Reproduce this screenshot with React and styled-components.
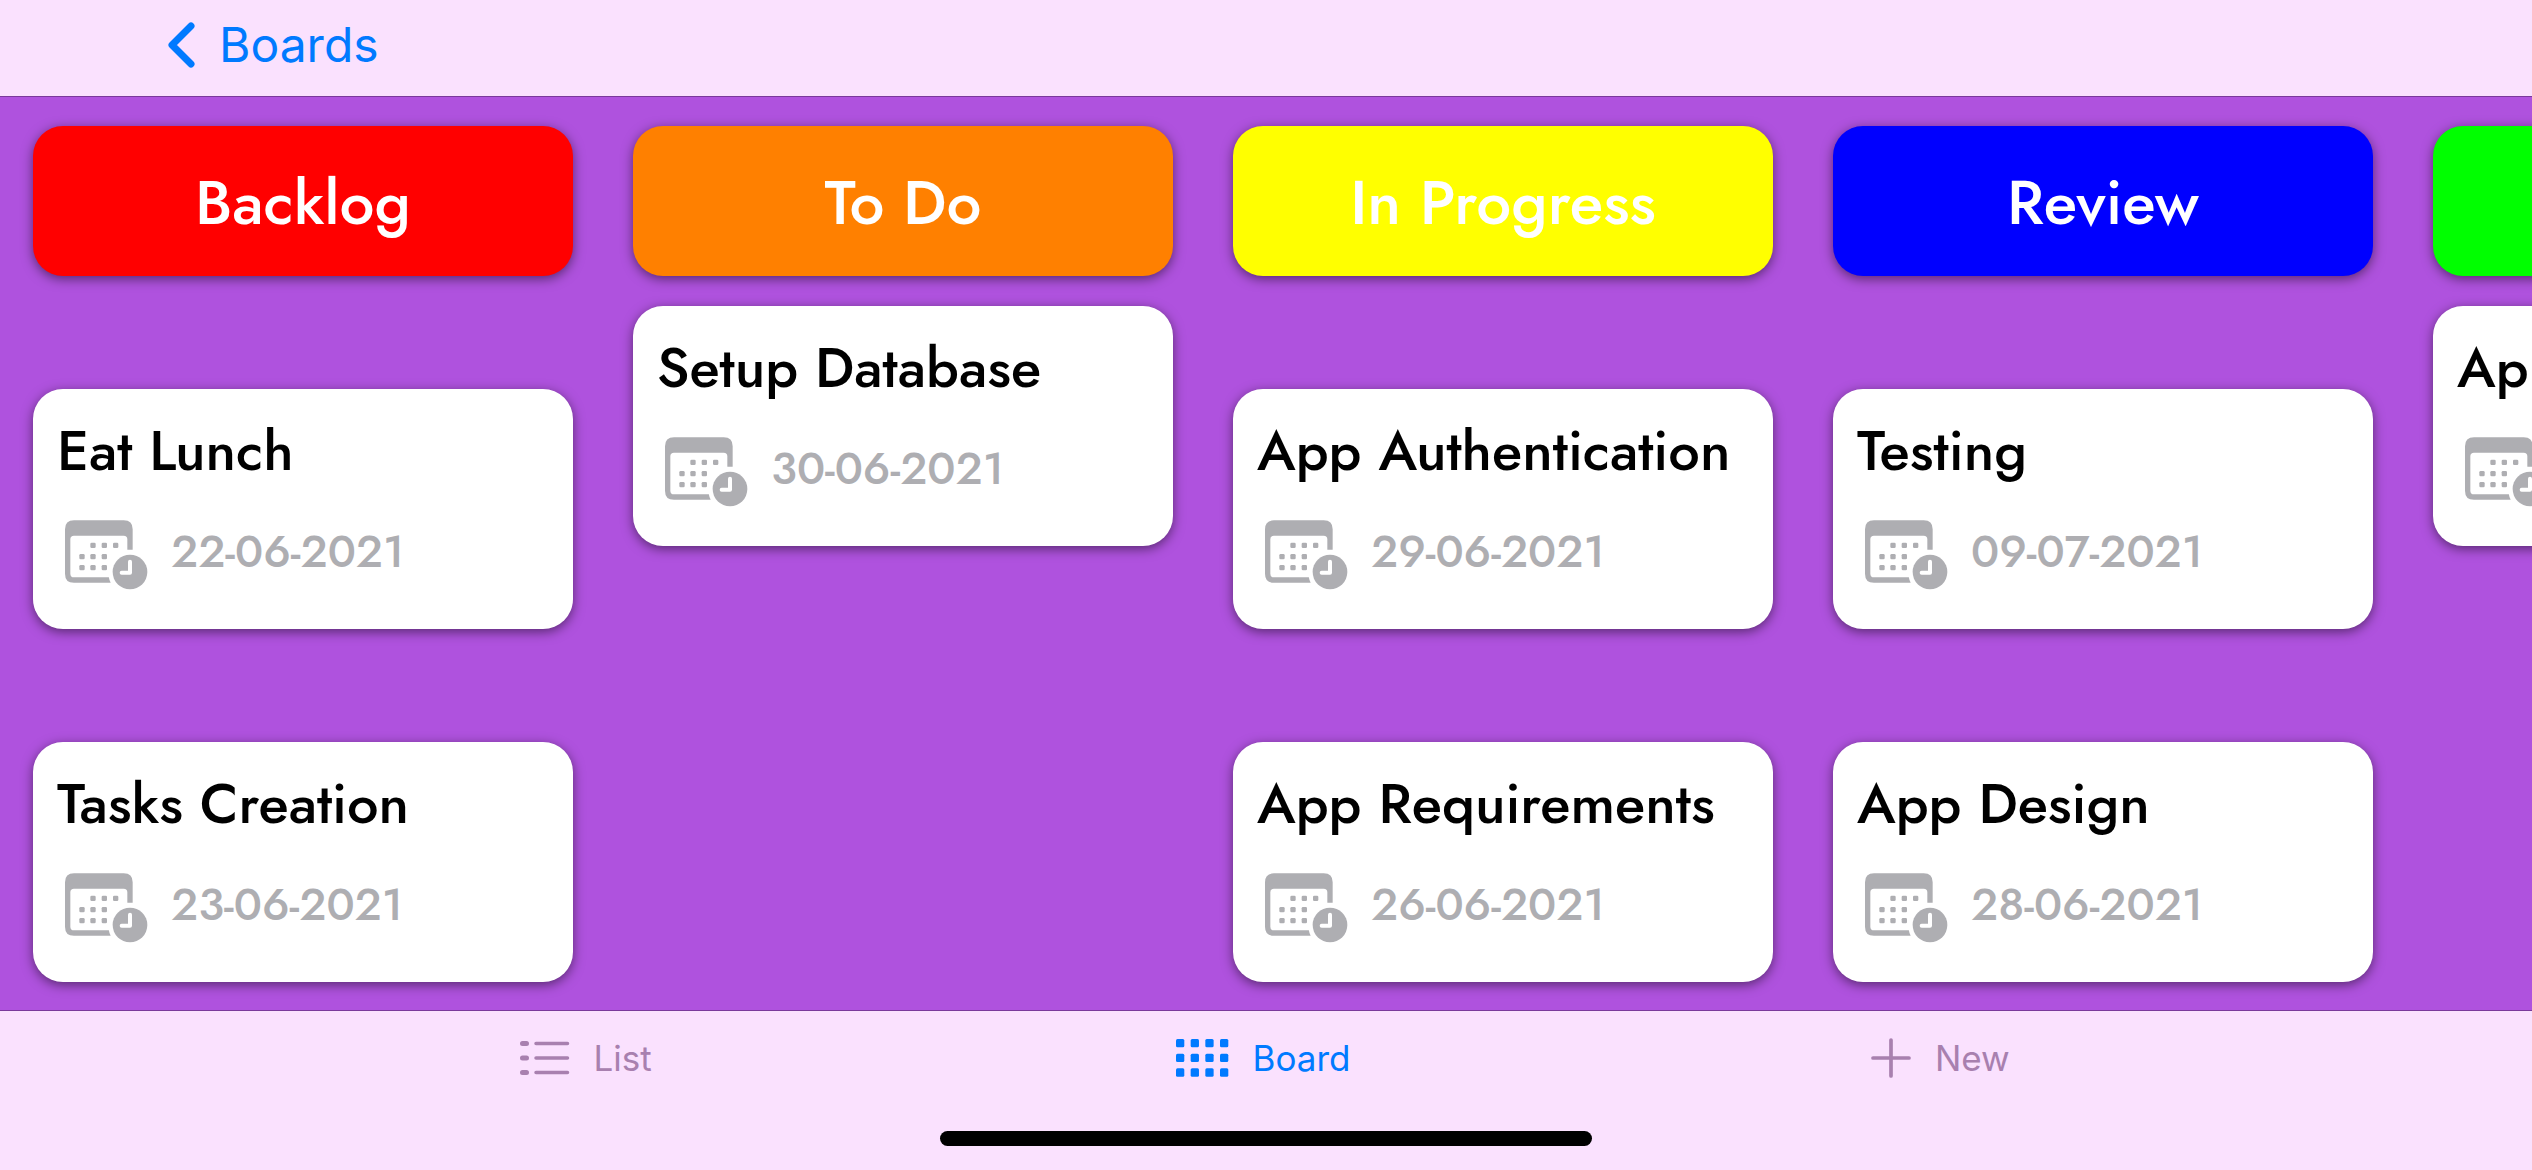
import React from "react";
import styled, { createGlobalStyle } from "styled-components";

const GlobalStyle = createGlobalStyle`
  *, *::before, *::after { box-sizing: border-box; }
  body { margin: 0; background: #fae1fe; }
`;

const displayFont = `"Futura", "Jost", "Lato", sans-serif`;
const systemFont = `"Inter", "Roboto", sans-serif`;

const Screen = styled.div`
  display: flex;
  flex-direction: column;
  min-height: 100vh;
  background: #fae1fe;
  font-family: ${systemFont};
`;

const NavBar = styled.header`
  display: flex;
  align-items: center;
  height: 97px;
  padding: 0 168px 6px;
  border-bottom: 1px solid #7a399b;
`;

const BackLink = styled.a`
  display: flex;
  align-items: center;
  gap: 24px;
  color: #007aff;
  font-size: 48px;
  line-height: 60px;
  text-decoration: none;
`;

const Board = styled.main`
  flex: 1;
  display: flex;
  gap: 60px;
  padding: 29px 33px 28px;
  overflow-x: auto;
  scrollbar-width: none;
  background: #af52de;
  font-family: ${displayFont};
`;

const Column = styled.section`
  flex: 0 0 540px;
  display: flex;
  flex-direction: column;
  gap: 30px;
`;

const ColumnTitle = styled.h2`
  display: flex;
  align-items: center;
  justify-content: center;
  height: 150px;
  margin: 0;
  padding-top: 3px;
  border-radius: 30px;
  background: ${(p) => p.$color};
  box-shadow: 0 3px 12px rgba(0, 0, 0, 0.5);
  color: #fff;
  font-size: 62px;
  font-weight: 500;
  line-height: 76px;
`;

const CardList = styled.ul`
  flex: 1;
  display: flex;
  flex-direction: column;
  justify-content: ${(p) => (p.$single ? "flex-start" : "flex-end")};
  gap: 113px;
  margin: 0;
  padding: 0;
  list-style: none;
`;

const Card = styled.li`
  display: flex;
  flex-direction: column;
  gap: 36px;
  height: 240px;
  padding: 29px 24px 28px;
  border-radius: 30px;
  background: #fff;
  box-shadow: 0 3px 12px rgba(0, 0, 0, 0.5);
`;

const CardTitle = styled.h3`
  margin: 0;
  color: #000;
  font-size: 56px;
  font-weight: 500;
  line-height: 66px;
  white-space: nowrap;
`;

const DueDate = styled.div`
  display: flex;
  align-items: center;
  gap: 23px;
  padding-left: 8px;
  color: #aeaeb2;
  font-size: 45px;
  font-weight: 500;
  line-height: 58px;
`;

const DateText = styled.time`
  padding-bottom: 6px;
`;

const TabBar = styled.nav`
  display: flex;
  height: 121px;
  padding: 0 250px;
  border-top: 1px solid #7a399b;
`;

const Tab = styled.button`
  flex: 1;
  display: flex;
  align-items: center;
  justify-content: center;
  gap: 24px;
  padding: 0 6px 26px 0;
  border: 0;
  background: none;
  color: ${(p) => (p.$active ? "#007aff" : "#a880af")};
  font-family: inherit;
  font-size: 35px;
  line-height: 44px;
`;

const HomeArea = styled.footer`
  display: flex;
  justify-content: center;
  height: 39px;
`;

const HomeIndicator = styled.div`
  width: 652px;
  height: 15px;
  border-radius: 8px;
  background: #000;
`;

const BackIcon = () => (
  <svg width="27" height="46" viewBox="0 0 27 46" fill="none" aria-hidden="true">
    <path d="M23 4 4 23l19 19" stroke="currentColor" strokeWidth="7" strokeLinecap="round" strokeLinejoin="round" />
  </svg>
);

const dots = [
  [84, 76], [118, 76], [152, 76],
  [51, 110], [84, 110], [118, 110],
  [51, 143], [84, 143], [118, 143],
];

const CalendarIcon = () => (
  <svg width="83" height="70" viewBox="0 0 249 210" fill="currentColor" aria-hidden="true">
    <path
      fillRule="evenodd"
      d="M27 1H176Q203 1 203 28V89.500H187V58Q187 47 176 47H27Q16 47 16 58V161Q16 172 27 172H131.500Q133 181 137 188.500H27Q0 188.500 0 161V28Q0 1 27 1Z"
    />
    {dots.map(([x, y]) => (
      <rect key={`${x}-${y}`} x={x - 8} y={y - 8} width="16" height="16" rx="4" />
    ))}
    <circle cx="195" cy="156" r="52" />
    <path d="M195 125V158H170" fill="none" stroke="#fff" strokeWidth="12" strokeLinecap="round" strokeLinejoin="round" />
  </svg>
);

const ListIcon = () => (
  <svg width="50" height="36" viewBox="0 0 50 36" stroke="currentColor" strokeLinecap="round" aria-hidden="true">
    <path d="M2.500 3.500h4M2.500 18h4M2.500 32.500h4" strokeWidth="5" />
    <path d="M16 3.500h31.500M16 18h31.500M16 32.500h31.500" strokeWidth="3.500" />
  </svg>
);

const GridIcon = () => (
  <svg width="53" height="38" viewBox="0 0 53 38" fill="currentColor" aria-hidden="true">
    {[0, 14.67, 29.33].map((y) =>
      [0, 14.67, 29.33, 44].map((x) => <rect key={`${x}-${y}`} x={x} y={y} width="8.300" height="8.300" rx="1.500" />)
    )}
  </svg>
);

const PlusIcon = () => (
  <svg width="40" height="40" viewBox="0 0 40 40" stroke="currentColor" strokeWidth="3.700" strokeLinecap="round" aria-hidden="true">
    <path d="M20 2v36M2 20h36" />
  </svg>
);

const columns = [
  {
    name: "Backlog",
    color: "#ff0000",
    tasks: [
      { title: "Eat Lunch", due: "22-06-2021" },
      { title: "Tasks Creation", due: "23-06-2021" },
    ],
  },
  { name: "To Do", color: "#ff8000", tasks: [{ title: "Setup Database", due: "30-06-2021" }] },
  {
    name: "In Progress",
    color: "#ffff00",
    tasks: [
      { title: "App Authentication", due: "29-06-2021" },
      { title: "App Requirements", due: "26-06-2021" },
    ],
  },
  {
    name: "Review",
    color: "#0000ff",
    tasks: [
      { title: "Testing", due: "09-07-2021" },
      { title: "App Design", due: "28-06-2021" },
    ],
  },
  { name: "Done", color: "#00ff00", tasks: [{ title: "App" }] },
];

const tabs = [
  { label: "List", Icon: ListIcon },
  { label: "Board", Icon: GridIcon, active: true },
  { label: "New", Icon: PlusIcon },
];

export default function App() {
  return (
    <Screen>
      <GlobalStyle />
      <NavBar>
        <BackLink href="#boards">
          <BackIcon />
          Boards
        </BackLink>
      </NavBar>
      <Board>
        {columns.map(({ name, color, tasks }) => (
          <Column key={name}>
            <ColumnTitle $color={color}>{name}</ColumnTitle>
            <CardList $single={tasks.length === 1}>
              {tasks.map(({ title, due }) => (
                <Card key={title}>
                  <CardTitle>{title}</CardTitle>
                  <DueDate>
                    <CalendarIcon />
                    {due && <DateText>{due}</DateText>}
                  </DueDate>
                </Card>
              ))}
            </CardList>
          </Column>
        ))}
      </Board>
      <TabBar>
        {tabs.map(({ label, Icon, active }) => (
          <Tab key={label} type="button" $active={active} aria-current={active ? "page" : undefined}>
            <Icon />
            {label}
          </Tab>
        ))}
      </TabBar>
      <HomeArea>
        <HomeIndicator />
      </HomeArea>
    </Screen>
  );
}
